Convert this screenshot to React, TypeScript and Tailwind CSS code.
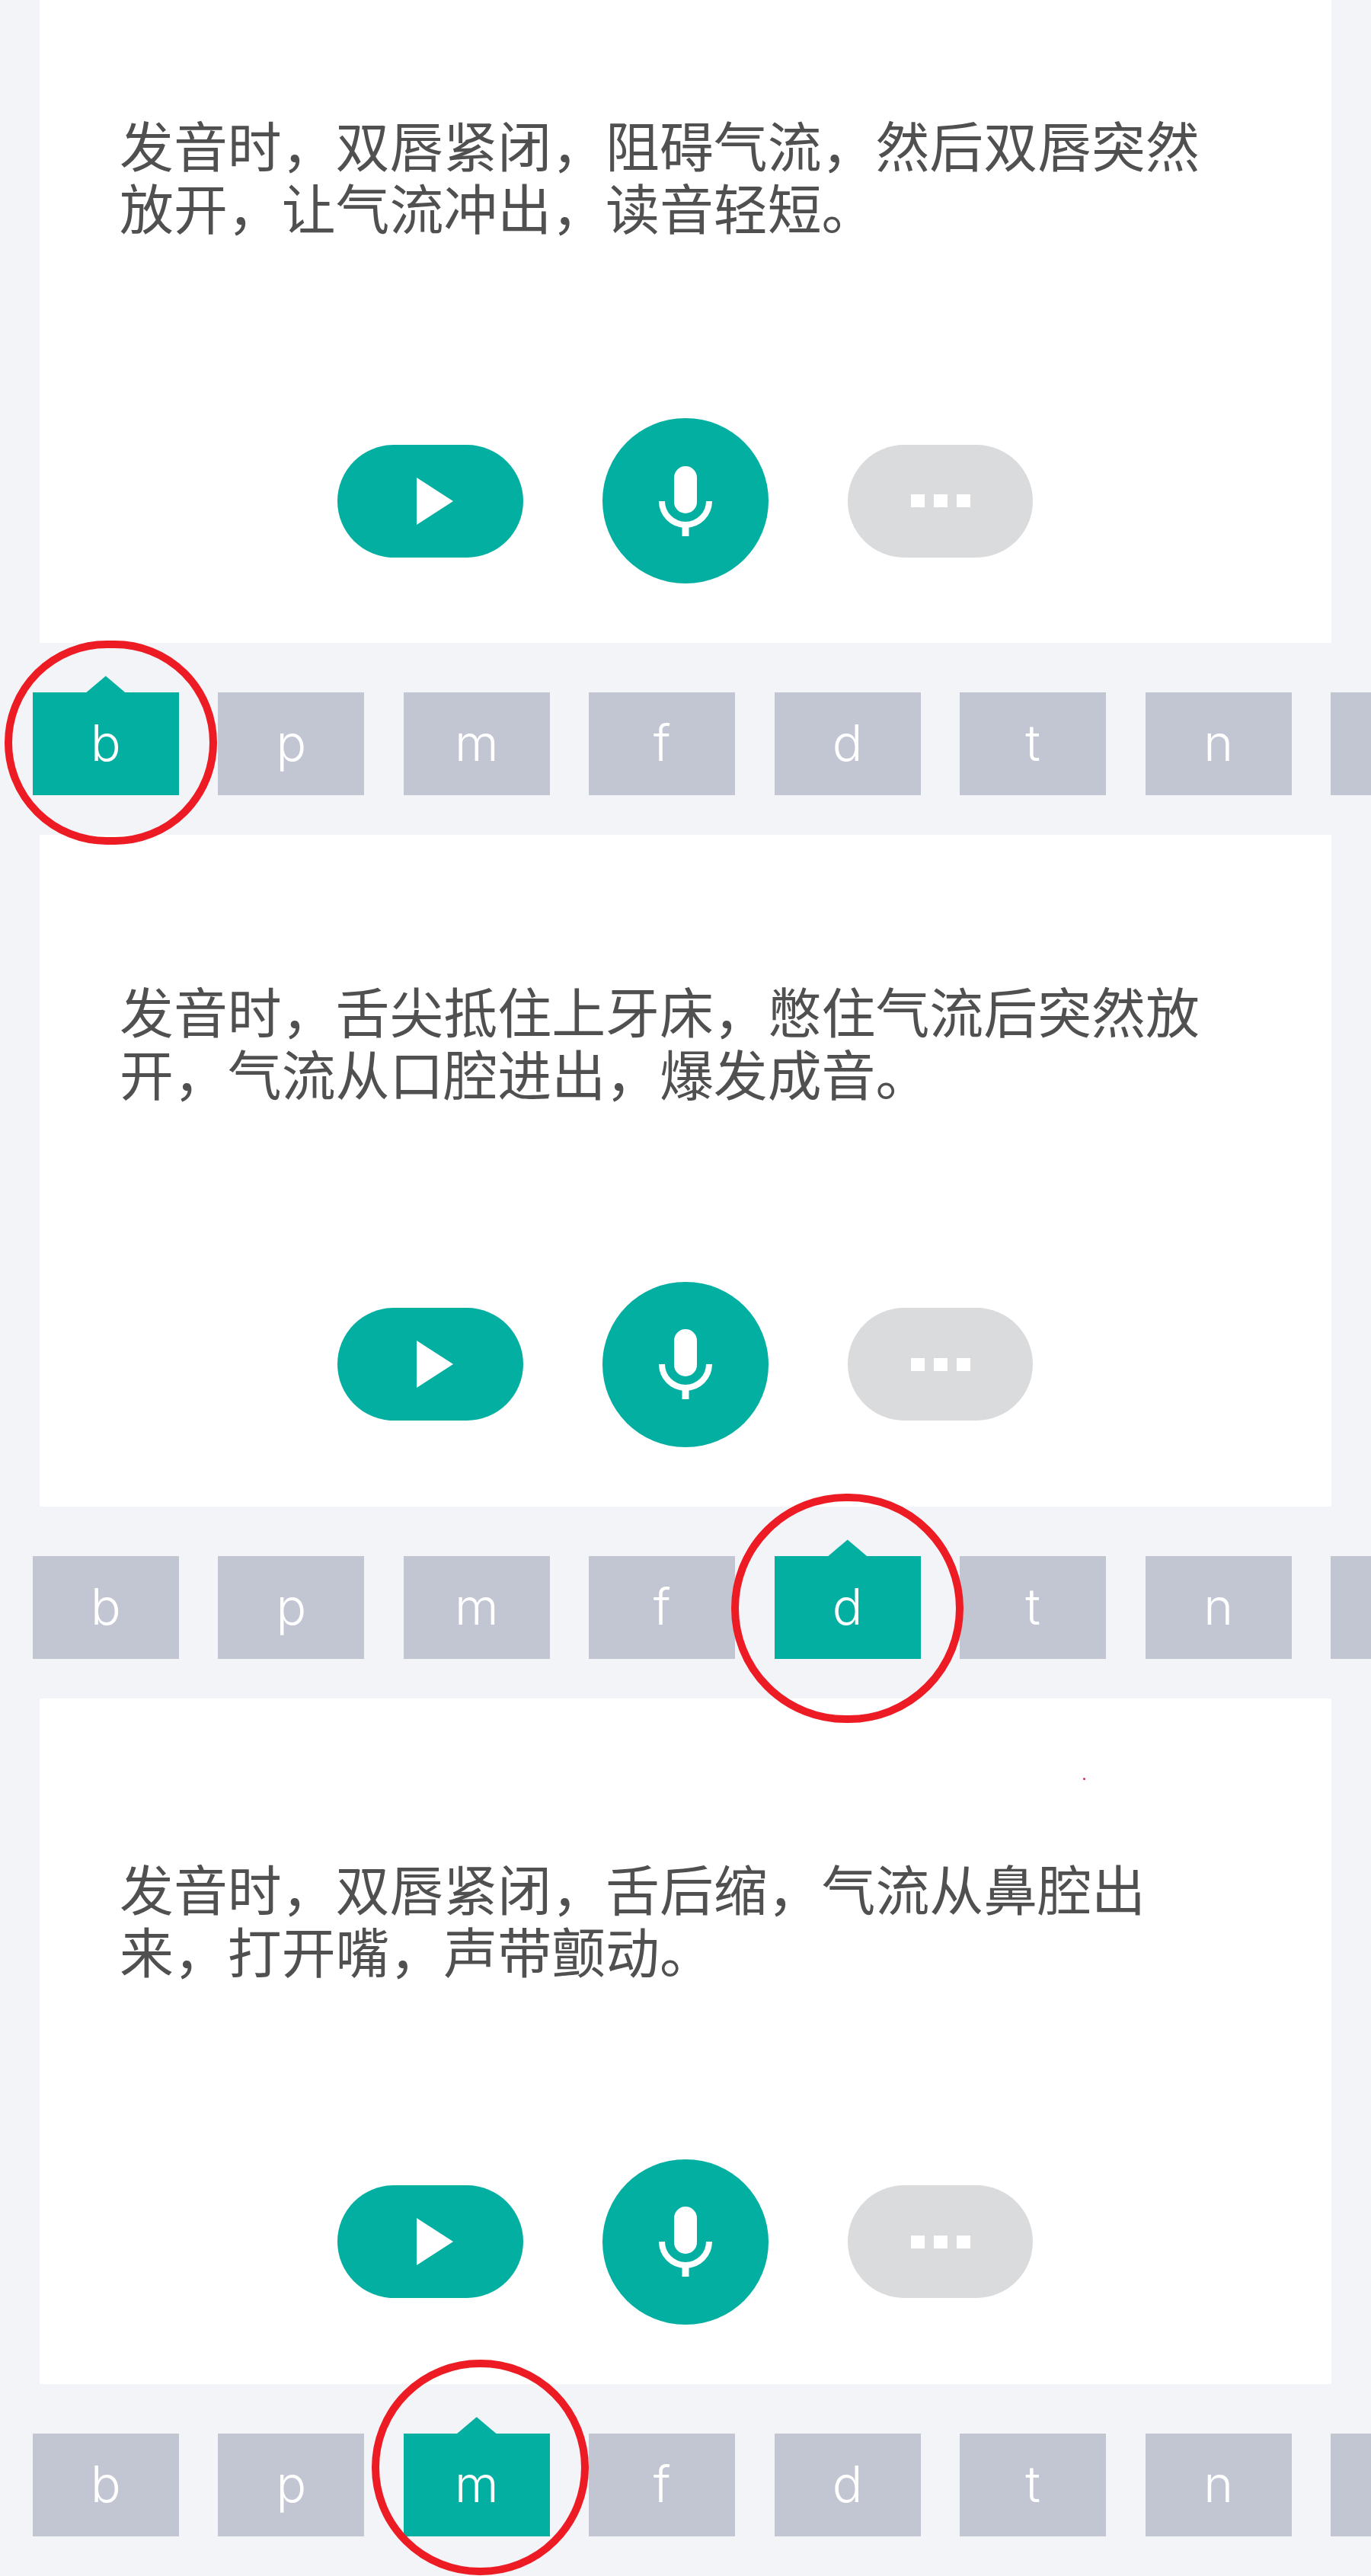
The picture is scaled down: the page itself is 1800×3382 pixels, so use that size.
const LETTERS = ["b", "p", "m", "f", "d", "t", "n", ""];

type Ring = {
    left: string,
    top: string,
    width: string,
    height: string
}

function Tabs({ active }: { active: string }) {
    return (
        <div className="flex gap-[51.9px] overflow-hidden pl-[43px] pt-[65.4px] pb-[52px]">
            {LETTERS.map((letter) => (
                <div
                    key={letter}
                    className={
                        letter === active
                            ? "relative flex h-[134.3px] w-[191.6px] shrink-0 items-center justify-center bg-[#03afa1] pb-[3px] font-['Inter',sans-serif] text-[66px] leading-none font-light text-white"
                            : "flex h-[134.3px] w-[191.6px] shrink-0 items-center justify-center bg-[#c2c6d3] pb-[3px] font-['Inter',sans-serif] text-[66px] leading-none font-light text-white"
                    }
                >
                    {letter === active && (
                        <span className="absolute left-1/2 top-[-22px] h-[22px] w-[52px] -translate-x-1/2 [clip-path:polygon(50%_0,100%_100%,0_100%)] bg-[#03afa1]" />
                    )}
                    {letter}
                </div>
            ))}
        </div>
    );
}

function Controls() {
    return (
        <div className="flex items-center justify-center gap-[104px] pr-[1px]">
            <button className="flex h-[148px] w-[244px] items-center justify-center rounded-full bg-[#03afa1]">
                <svg width="48" height="62" viewBox="0 0 48 62" className="ml-[12px]">
                    <path d="M0 0 L48 31 L0 62 Z" fill="#ffffff" />
                </svg>
            </button>
            <button className="flex h-[217px] w-[218px] items-center justify-center rounded-full bg-[#03afa1]">
                <svg width="70" height="92" viewBox="0 0 70 92">
                    <rect x="20" y="0" width="30" height="62" rx="15" fill="#ffffff" />
                    <path d="M4 46 a31 31 0 0 0 62 0" fill="none" stroke="#ffffff" strokeWidth="8" />
                    <rect x="30.5" y="76" width="9" height="16" fill="#ffffff" />
                </svg>
            </button>
            <button className="flex h-[148px] w-[243px] items-center justify-center gap-[12px] rounded-full bg-[#dadbdd]">
                <span className="h-[17px] w-[18px] bg-white" />
                <span className="h-[17px] w-[18px] bg-white" />
                <span className="h-[17px] w-[18px] bg-white" />
            </button>
        </div>
    );
}

function Card({ text, height, top }: { text: string, height: string, top: string }) {
    return (
        <div className={`mx-[52px] flex flex-col justify-between bg-white pb-[78px] ${height} ${top}`}>
            <p className="px-[105px] text-[70.9px] leading-[82px] text-[#505050]">{text}</p>
            <Controls />
        </div>
    );
}

export default function App() {
    const rings: Ring[] = [
        { left: "left-[6px]", top: "top-[841px]", width: "w-[279px]", height: "h-[268px]" },
        { left: "left-[960px]", top: "top-[1961px]", width: "w-[305px]", height: "h-[301px]" },
        { left: "left-[488px]", top: "top-[3098px]", width: "w-[285px]", height: "h-[283px]" }
    ];

    return (
        <div className="relative h-[3382px] w-[1800px] overflow-hidden bg-[#f3f4f8] font-['Noto_Sans','Noto_Sans_CJK_SC',sans-serif]">
            <Card
                height="h-[844px]"
                top="pt-[151px]"
                text="发音时，双唇紧闭，阻碍气流，然后双唇突然放开，让气流冲出，读音轻短。"
            />
            <Tabs active="b" />
            <Card
                height="h-[882.3px]"
                top="pt-[192px]"
                text="发音时，舌尖抵住上牙床，憋住气流后突然放开，气流从口腔进出，爆发成音。"
            />
            <Tabs active="d" />
            <Card
                height="h-[900.3px]"
                top="pt-[210px]"
                text="发音时，双唇紧闭，舌后缩，气流从鼻腔出来，打开嘴，声带颤动。"
            />
            <Tabs active="m" />

            {/* red circles marked over the screenshot */}
            {rings.map((ring) => (
                <div
                    key={ring.top}
                    className={`absolute rounded-full border-[10px] border-[#ed1c24] ${ring.left} ${ring.top} ${ring.width} ${ring.height}`}
                />
            ))}
            <span className="absolute left-[1422px] top-[2334px] h-[3px] w-[3px] rounded-full bg-[#c8304a]" />
        </div>
    );
}
